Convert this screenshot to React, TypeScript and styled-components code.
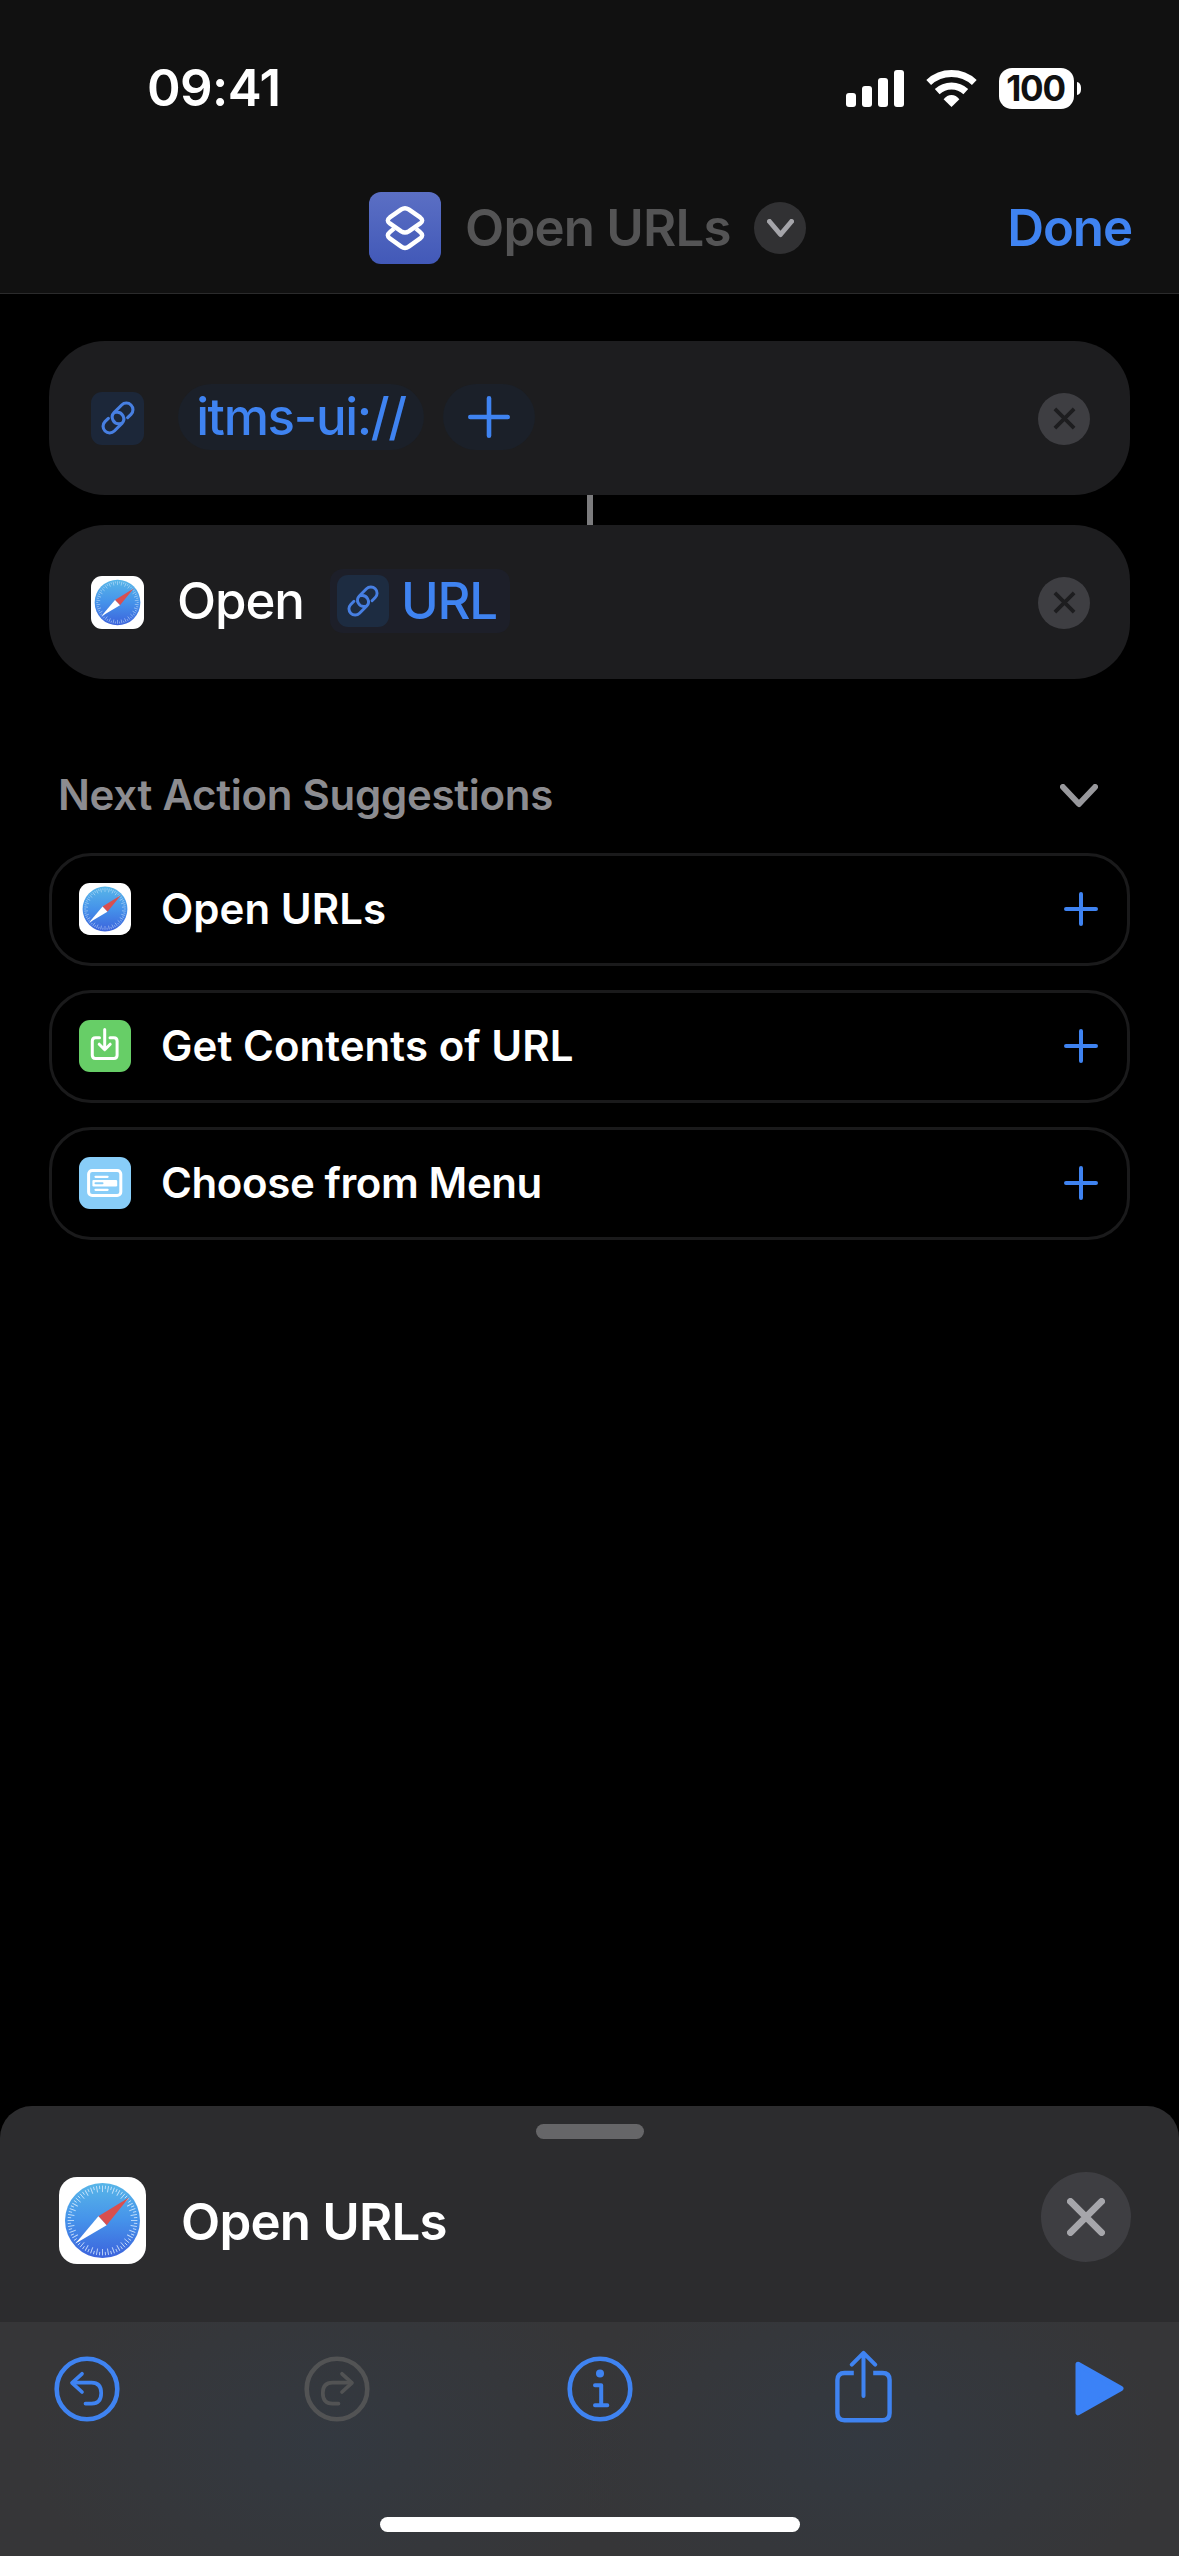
import React from "react";
import styled, { createGlobalStyle } from "styled-components";

const BLUE = "#3f83f1";

const GlobalStyle = createGlobalStyle`
  * { box-sizing: border-box; }
  body {
    margin: 0;
    background: #000;
    font-family: Inter, "Liberation Sans", sans-serif;
    -webkit-font-smoothing: antialiased;
  }
  svg { display: block; flex: none; }
  button { border: 0; padding: 0; background: none; font: inherit; color: inherit; display: block; }
`;

const Screen = styled.div`
  width: 1179px;
  height: 2556px;
  display: flex;
  flex-direction: column;
  background: #000;
  overflow: hidden;
`;

const Label = styled.span<{ $size: number; $weight?: number; $track?: number; $color?: string }>`
  display: block;
  font-size: ${(p) => p.$size}px;
  line-height: 1.2;
  font-weight: ${(p) => p.$weight ?? 600};
  letter-spacing: ${(p) => p.$track ?? 0}px;
  color: ${(p) => p.$color ?? "#fff"};
  white-space: nowrap;
`;

/* Header */

const Header = styled.header`
  background: #111111;
  border-bottom: 1px solid #2b2b2c;
`;

const StatusBar = styled.div`
  height: 164px;
  padding: 12px 98px 0 147px;
  display: flex;
  align-items: center;
  justify-content: space-between;
`;

const StatusIcons = styled.div`
  display: flex;
  align-items: center;
`;

const SignalBars = styled.div`
  display: flex;
  align-items: flex-end;
  gap: 6px;
  height: 37px;
`;

const SignalBar = styled.span<{ $h: number }>`
  width: 10px;
  height: ${(p) => p.$h}px;
  border-radius: 3px;
  background: #fff;
`;

const Wifi = styled.svg`
  margin: 0 22px;
`;

const Battery = styled.div`
  width: 75px;
  height: 41px;
  border-radius: 13px;
  background: #fff;
  display: flex;
  align-items: center;
  justify-content: center;
  padding-right: 2px;
`;

const BatteryNub = styled.span`
  width: 4px;
  height: 13px;
  margin-left: 3px;
  border-radius: 0 5px 5px 0 / 0 7px 7px 0;
  background: #fff;
`;

const NavBar = styled.div`
  height: 129px;
  padding: 0 47px 1px 369px;
  display: flex;
  align-items: center;
`;

const AppTile = styled.div`
  width: 72px;
  height: 72px;
  border-radius: 12px;
  background: linear-gradient(#5b6fc4, #4259b8);
`;

const NavTitle = styled.div`
  width: 289px;
  margin-left: 24px;
`;

const Disc = styled.button<{ $size: number; $bg: string }>`
  flex: none;
  width: ${(p) => p.$size}px;
  height: ${(p) => p.$size}px;
  border-radius: 50%;
  background: ${(p) => p.$bg};
  display: flex;
  align-items: center;
  justify-content: center;
`;

const DoneButton = styled.button`
  margin-left: auto;
`;

/* Editor */

const Editor = styled.main`
  flex: 1;
  padding: 47px 49px 0;
`;

const ActionCard = styled.section`
  height: 154px;
  border-radius: 56px;
  background: #1d1d1f;
  padding: 0 40px 0 42px;
  display: flex;
  align-items: center;
`;

const Connector = styled.div`
  width: 6px;
  height: 30px;
  margin: 0 auto;
  background: #7b7b7d;
`;

const LinkTile = styled.span<{ $size: number; $bg: string }>`
  width: ${(p) => p.$size}px;
  height: ${(p) => p.$size}px;
  border-radius: 11px;
  background: ${(p) => p.$bg};
  display: flex;
  align-items: center;
  justify-content: center;
  flex: none;
`;

const Pill = styled.span<{ $w: number; $ml: number }>`
  width: ${(p) => p.$w}px;
  height: 66px;
  margin-left: ${(p) => p.$ml}px;
  margin-bottom: 2px;
  border-radius: 33px;
  background: #1b2029;
  display: flex;
  align-items: center;
  justify-content: center;
`;

const Variable = styled.span`
  height: 64px;
  width: 180px;
  padding-left: 7px;
  margin: 0 0 3px 27px;
  gap: 12px;
  border-radius: 13px;
  background: #1d1f29;
  display: flex;
  align-items: center;
`;

const ActionVerb = styled.span`
  margin: 0 0 3px 33px;
  width: 126px;
`;

const CardClose = styled.span`
  margin: 1px 0 0 auto;
`;

/* Suggestions */

const SuggestionHeader = styled.div`
  margin-top: 86px;
  height: 60px;
  padding: 0 32px 0 9px;
  display: flex;
  align-items: center;
  justify-content: space-between;
`;

const Disclosure = styled.span`
  padding-top: 2px;
`;

const SuggestionList = styled.div`
  margin-top: 28px;
  display: grid;
  gap: 24px;
`;

const SuggestionRow = styled.div`
  height: 113px;
  border: 3px solid #1a1a1b;
  border-radius: 42px;
  padding: 0 29px 1px 27px;
  display: flex;
  align-items: center;
`;

const SuggestionName = styled.span`
  flex: 1;
  margin-left: 30px;
`;

const IconTile = styled.span<{ $bg: string }>`
  width: 52px;
  height: 52px;
  border-radius: 11px;
  background: ${(p) => p.$bg};
`;

/* Bottom sheet */

const Sheet = styled.section`
  height: 216px;
  border-radius: 32px 32px 0 0;
  background: #2c2c2e;
  padding-top: 18px;
`;

const Grabber = styled.div`
  width: 108px;
  height: 15px;
  margin: 0 auto;
  border-radius: 8px;
  background: #666668;
`;

const SheetRow = styled.div`
  height: 163px;
  padding: 0 48px 0 59px;
  display: flex;
  align-items: center;
`;

const SheetTitle = styled.span`
  flex: 1;
  margin-left: 35px;
  padding-top: 2px;
`;

const SheetClose = styled.span`
  padding-bottom: 7px;
`;

const Toolbar = styled.nav`
  height: 234px;
  padding: 28px 54px 24px;
  background:
    radial-gradient(ellipse 300px 190px at 330px 120px, rgba(50, 58, 68, 0.7), transparent),
    radial-gradient(ellipse 300px 190px at 865px 120px, rgba(50, 58, 68, 0.7), transparent),
    #363638;
  display: flex;
  flex-direction: column;
  justify-content: space-between;
`;

const Tools = styled.div`
  display: flex;
  align-items: center;
  height: 77px;
`;

const Tool = styled.button<{ $gap?: number; $lift?: number }>`
  margin-left: ${(p) => p.$gap ?? 0}px;
  margin-bottom: ${(p) => p.$lift ?? 0}px;
`;

const HomeIndicator = styled.div`
  width: 420px;
  height: 15px;
  margin: 0 auto;
  border-radius: 8px;
  background: #fff;
`;

/* Icons */

const WifiIcon = () => (
  <Wifi width="51" height="37" viewBox="0 0 51 37">
    <g fill="none" stroke="#fff" strokeWidth="7">
      <path d="M2.7 12.5A33.5 33.5 0 0 1 48.3 12.5" />
      <path d="M11.2 21.6A21 21 0 0 1 39.8 21.6" />
    </g>
    <path d="M25.5 37L17.6 29.3Q21 25 25.5 25T33.4 29.3Z" fill="#fff" />
  </Wifi>
);

const ShortcutsIcon = () => (
  <svg width="72" height="72" viewBox="0 0 72 72" fill="none" stroke="#fff" strokeWidth="4.4" strokeLinejoin="round">
    <path d="M32.3 17.4Q36 15 39.7 17.4L51.2 25.4Q55.2 28.4 51.2 31.4L39.7 39.4Q36 41.8 32.3 39.4L20.8 31.4Q16.8 28.4 20.8 25.4Z" />
    <path d="M25 36.6L20.8 40.2Q16.8 43.4 20.8 46.4L32.3 54.6Q36 57.2 39.7 54.6L51.2 46.4Q55.2 43.4 51.2 40.2L47 36.6" />
  </svg>
);

const ChevronIcon = ({ w, h, sw, color }: { w: number; h: number; sw: number; color: string }) => (
  <svg width={w} height={h} viewBox={`0 0 ${w} ${h}`} fill="none" stroke={color} strokeWidth={sw} strokeLinecap="round" strokeLinejoin="round">
    <path d={`M${sw / 2} ${sw / 2}L${w / 2} ${h - sw / 2 - 1}L${w - sw / 2} ${sw / 2}`} />
  </svg>
);

const CrossIcon = ({ size, sw, color, cap }: { size: number; sw: number; color: string; cap: "round" | "butt" }) => (
  <svg width={size} height={size} viewBox={`0 0 ${size} ${size}`} stroke={color} strokeWidth={sw} strokeLinecap={cap}>
    <path d={`M${sw / 2} ${sw / 2}L${size - sw / 2} ${size - sw / 2}M${size - sw / 2} ${sw / 2}L${sw / 2} ${size - sw / 2}`} />
  </svg>
);

const PlusIcon = ({ size, sw }: { size: number; sw: number }) => (
  <svg width={size} height={size} viewBox={`0 0 ${size} ${size}`} stroke={BLUE} strokeWidth={sw} strokeLinecap="round">
    <path d={`M${size / 2} ${sw / 2}V${size - sw / 2}M${sw / 2} ${size / 2}H${size - sw / 2}`} />
  </svg>
);

const LinkIcon = ({ size }: { size: number }) => (
  <svg width={size} height={size} viewBox="-17 -17 34 34" fill="none" stroke="#477fe2" strokeWidth="3.1" strokeLinecap="round">
    <g transform="rotate(-45)">
      <path d="M-7 -6.6H-11.8A6.6 6.6 0 0 0 -11.8 6.6H-1A6.6 6.6 0 0 0 2.6 -5.4" />
      <path d="M7 6.6H11.8A6.6 6.6 0 0 0 11.8 -6.6H1A6.6 6.6 0 0 0 -2.6 5.4" />
    </g>
  </svg>
);

const SafariIcon = ({ size, ticks = 72 }: { size: number; ticks?: number }) => {
  const id = `dial-${size}`;
  return (
    <svg width={size} height={size} viewBox="0 0 87 87">
      <defs>
        <linearGradient id={id} x1="0" y1="0" x2="0" y2="1">
          <stop offset="0" stopColor="#58b6e8" />
          <stop offset="0.5" stopColor="#4592ea" />
          <stop offset="1" stopColor="#3c63dc" />
        </linearGradient>
      </defs>
      <rect width="87" height="87" rx="18" fill="#fff" />
      <circle cx="43.5" cy="43.5" r="37.5" fill={`url(#${id})`} />
      <g stroke="#d9ecff" strokeWidth="0.9" opacity="0.85">
        {Array.from({ length: ticks }, (_, i) => (
          <line
            key={i}
            x1="43.5"
            x2="43.5"
            y1="8.6"
            y2={i % 2 ? 12 : 15}
            transform={`rotate(${(i * 360) / ticks} 43.5 43.5)`}
          />
        ))}
      </g>
      <path d="M70 20.5L47.6 48.2L39.4 39.2Z" fill="#d94f4f" />
      <path d="M16.5 66.5L39.4 39.2L47.6 48.2Z" fill="#fff" />
    </svg>
  );
};

const DownloadIcon = () => (
  <svg width="52" height="52" viewBox="0 0 52 52" fill="none" stroke="#fff" strokeWidth="3" strokeLinecap="round" strokeLinejoin="round">
    <path d="M20.5 17.7H16.5Q13.3 17.7 13.3 21V35.3Q13.3 38.5 16.5 38.5H34.9Q38.1 38.5 38.1 35.3V21Q38.1 17.7 34.9 17.7H31" />
    <path d="M25.7 9.5V29.5M20.2 24.2L25.7 29.7L31.2 24.2" />
  </svg>
);

const MenuIcon = () => (
  <svg width="52" height="52" viewBox="0 0 52 52" fill="none" stroke="#fff" strokeLinecap="round">
    <rect x="9.6" y="13.4" width="32.2" height="25.2" rx="3.6" strokeWidth="3" />
    <path d="M16.5 19.8H28.6M16.5 32.8H28.6" strokeWidth="2.2" />
    <rect x="13.4" y="22.9" width="24.8" height="6.6" rx="1.2" fill="#fff" stroke="none" />
    <path d="M16.5 26.2H23.5" stroke="#88cdf8" strokeWidth="2" />
  </svg>
);

const TurnIcon = ({ color, flip = false }: { color: string; flip?: boolean }) => (
  <svg width="66" height="66" viewBox="0 0 66 66" fill="none" stroke={color} strokeWidth="4" strokeLinecap="round" strokeLinejoin="round">
    <circle cx="33" cy="33" r="30.3" strokeWidth="4.6" />
    <g transform={flip ? "translate(66 0) scale(-1 1)" : undefined}>
      <path d="M28 17.8L18 26.8L28 36" strokeWidth="3.7" />
      <path d="M19 26.6H37.5Q47.2 26.6 47.2 37Q47.2 47.6 37.5 47.6H31.5" strokeWidth="3.7" />
    </g>
  </svg>
);

const InfoIcon = () => (
  <svg width="66" height="66" viewBox="0 0 66 66" fill="none" stroke={BLUE} strokeWidth="4" strokeLinecap="round" strokeLinejoin="round">
    <circle cx="33" cy="33" r="30.3" strokeWidth="4.6" />
    <circle cx="33" cy="17.6" r="4" fill={BLUE} stroke="none" />
    <path d="M28 29.2H34.2V49M28 49.2H40.3" />
  </svg>
);

const ShareIcon = () => (
  <svg width="57" height="73" viewBox="0 0 57 73" fill="none" stroke={BLUE} strokeWidth="4.4" strokeLinejoin="round">
    <path d="M18.8 23H9.5Q2.4 23 2.4 30V63Q2.4 70.2 9.5 70.2H47.5Q54.6 70.2 54.6 63V30Q54.6 23 47.5 23H38.2" />
    <path d="M28.5 46V3.4M16.8 14.6L28.5 2.8L40.2 14.6" strokeLinecap="round" strokeWidth="4" />
  </svg>
);

const PlayIcon = () => (
  <svg width="49" height="55" viewBox="0 0 49 55">
    <path d="M3 3.2L46 27.5L3 51.8Z" fill="#3b82f7" stroke="#3b82f7" strokeWidth="5" strokeLinejoin="round" />
  </svg>
);

const suggestions = [
  { name: "Open URLs", track: 0.05, icon: <SafariIcon size={52} ticks={60} /> },
  { name: "Get Contents of URL", track: 0.05, icon: <IconTile $bg="#67ce67"><DownloadIcon /></IconTile> },
  { name: "Choose from Menu", track: -0.4, icon: <IconTile $bg="#88cdf8"><MenuIcon /></IconTile> },
];

const RemoveButton = () => (
  <CardClose>
    <Disc $size={52} $bg="#3e3e42" aria-label="Remove">
      <CrossIcon size={23} sw={3.8} color="#1d1d1f" cap="butt" />
    </Disc>
  </CardClose>
);

export default function App() {
  return (
    <Screen>
      <GlobalStyle />
      <Header>
        <StatusBar>
          <Label $size={51} $track={-0.6}>09:41</Label>
          <StatusIcons>
            <SignalBars>
              {[14, 21, 29, 37].map((h) => <SignalBar key={h} $h={h} />)}
            </SignalBars>
            <WifiIcon />
            <Battery>
              <Label $size={35} $weight={700} $track={-1.2} $color="#111">100</Label>
            </Battery>
            <BatteryNub />
          </StatusIcons>
        </StatusBar>
        <NavBar>
          <AppTile><ShortcutsIcon /></AppTile>
          <NavTitle><Label $size={51} $track={-0.8} $color="#545455">Open URLs</Label></NavTitle>
          <Disc $size={52} $bg="#313133" aria-label="Shortcut options">
            <ChevronIcon w={27} h={19} sw={5} color="#a5a5aa" />
          </Disc>
          <DoneButton><Label $size={51} $track={-1.1} $color={BLUE}>Done</Label></DoneButton>
        </NavBar>
      </Header>

      <Editor>
        <ActionCard>
          <LinkTile $size={53} $bg="#1c2739"><LinkIcon size={34} /></LinkTile>
          <Pill $w={246} $ml={34}><Label $size={51} $weight={500} $track={-1.35} $color={BLUE}>itms-ui://</Label></Pill>
          <Pill $w={92} $ml={19}><PlusIcon size={42} sw={4.6} /></Pill>
          <RemoveButton />
        </ActionCard>
        <Connector />
        <ActionCard>
          <SafariIcon size={53} ticks={60} />
          <ActionVerb><Label $size={51} $weight={500} $track={-1.1}>Open</Label></ActionVerb>
          <Variable>
            <LinkTile $size={52} $bg="#1d2c41"><LinkIcon size={32} /></LinkTile>
            <Label $size={51} $weight={500} $track={-1.3} $color={BLUE}>URL</Label>
          </Variable>
          <RemoveButton />
        </ActionCard>

        <SuggestionHeader>
          <Label $size={42} $track={-0.28} $color="#8c8c90">Next Action Suggestions</Label>
          <Disclosure><ChevronIcon w={38} h={24} sw={5.8} color="#98989c" /></Disclosure>
        </SuggestionHeader>
        <SuggestionList>
          {suggestions.map((s) => (
            <SuggestionRow key={s.name}>
              {s.icon}
              <SuggestionName><Label $size={42} $track={s.track}>{s.name}</Label></SuggestionName>
              <PlusIcon size={34} sw={4} />
            </SuggestionRow>
          ))}
        </SuggestionList>
      </Editor>

      <Sheet>
        <Grabber />
        <SheetRow>
          <SafariIcon size={87} />
          <SheetTitle><Label $size={51} $track={-0.8}>Open URLs</Label></SheetTitle>
          <SheetClose>
            <Disc $size={90} $bg="#3e3e42" aria-label="Close">
              <CrossIcon size={38} sw={6.8} color="#a6a6ab" cap="round" />
            </Disc>
          </SheetClose>
        </SheetRow>
      </Sheet>
      <Toolbar>
        <Tools>
          <Tool aria-label="Undo"><TurnIcon color={BLUE} /></Tool>
          <Tool $gap={184} aria-label="Redo"><TurnIcon color="#525354" flip /></Tool>
          <Tool $gap={197} aria-label="Info"><InfoIcon /></Tool>
          <Tool $gap={202} $lift={4} aria-label="Share"><ShareIcon /></Tool>
          <Tool $gap={183} aria-label="Run"><PlayIcon /></Tool>
        </Tools>
        <HomeIndicator />
      </Toolbar>
    </Screen>
  );
}
